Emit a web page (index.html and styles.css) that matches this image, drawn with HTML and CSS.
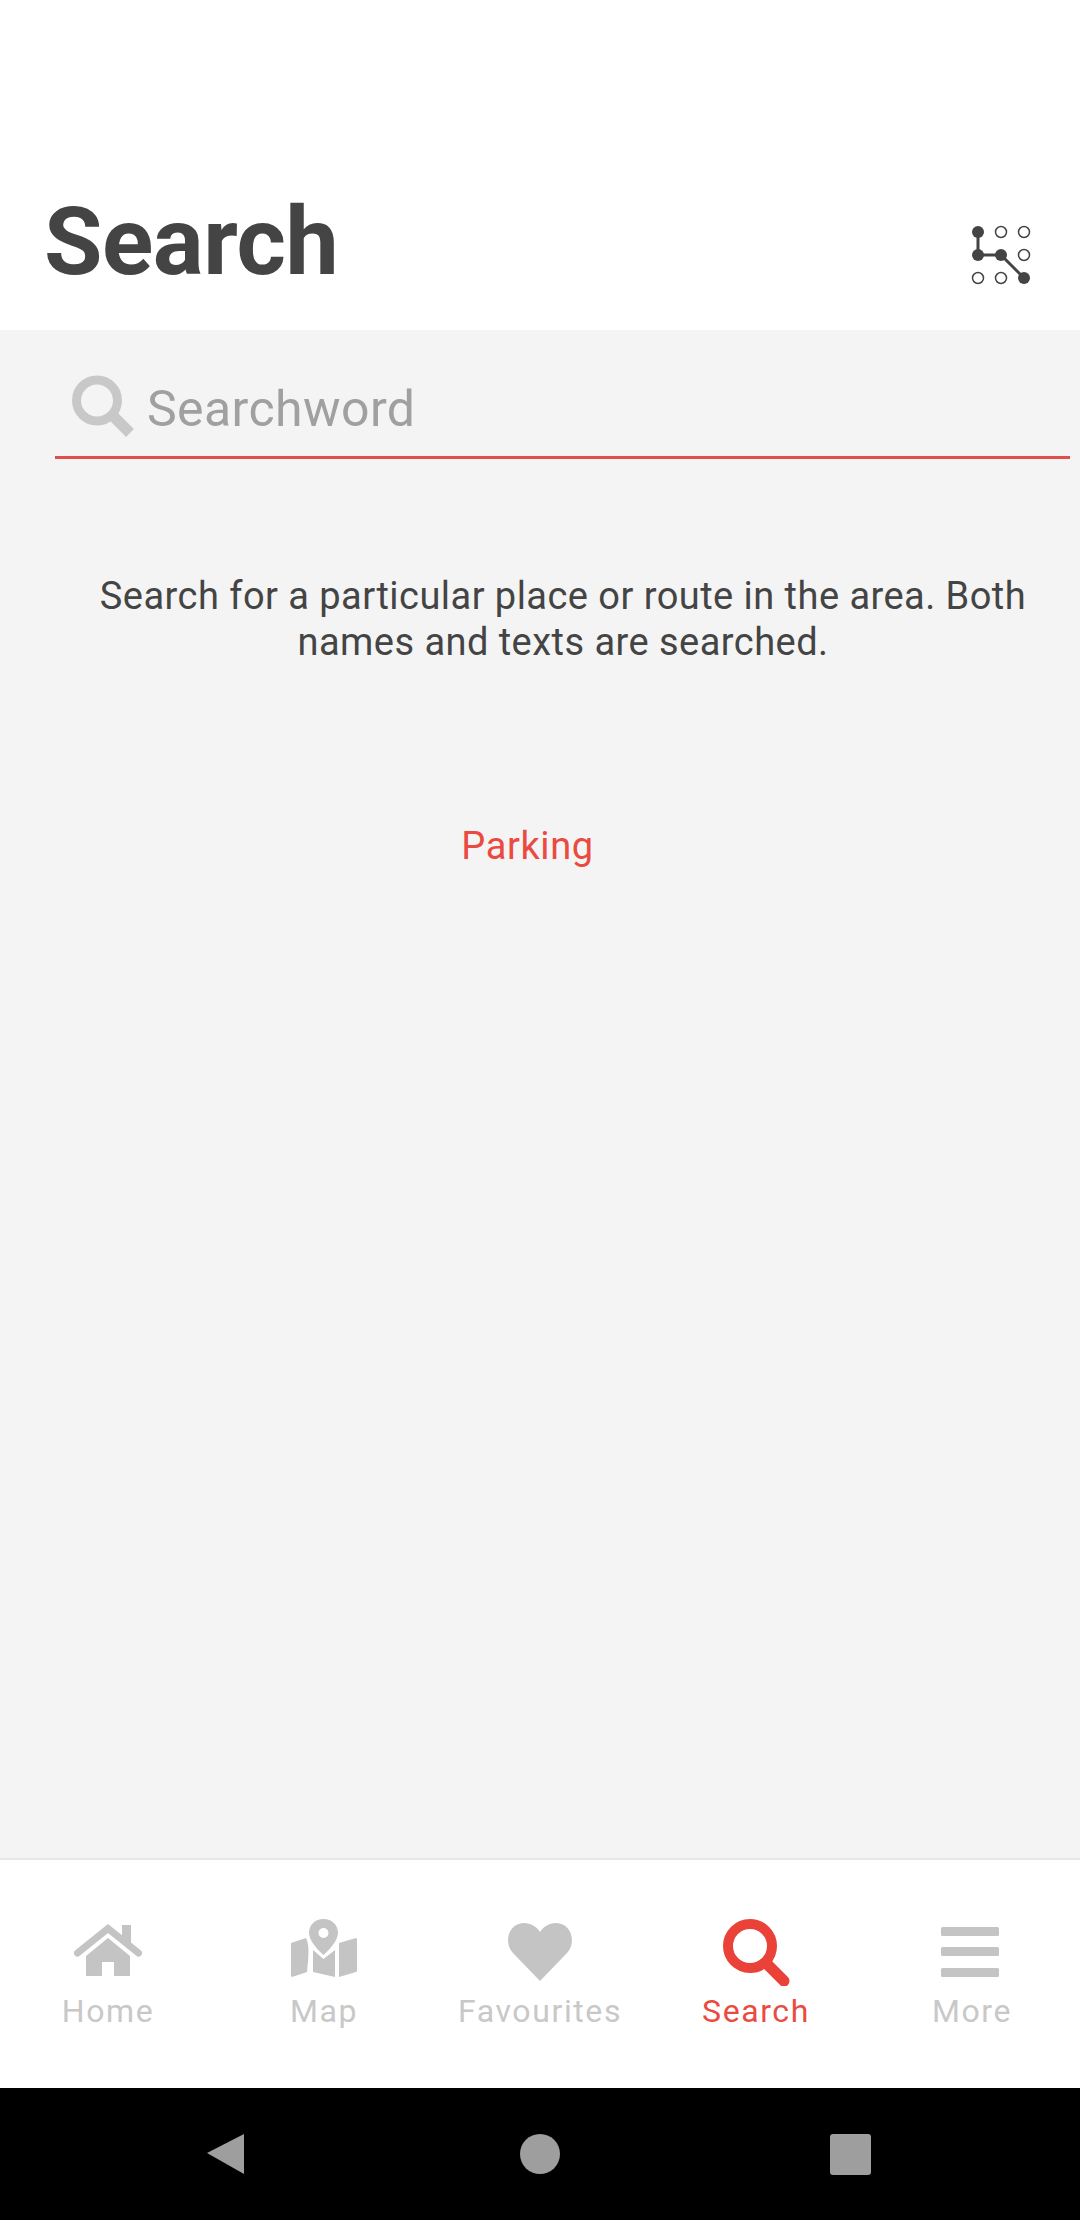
FILE: index.html
```html
<!DOCTYPE html>
<html lang="en">
<head>
<meta charset="utf-8">
<title>Search</title>
<link rel="stylesheet" href="styles.css">
</head>
<body>
<div class="app">
  <header class="header">
    <h1 class="title">Search</h1>
    <svg class="pattern" width="62" height="62" viewBox="0 0 62 62">
      <path class="pattern-line" d="M8 8V31H31L54 54"/>
      <circle class="dot-on" cx="8" cy="8" r="6"/>
      <circle class="dot-off" cx="31" cy="8" r="5.5"/>
      <circle class="dot-off" cx="54" cy="8" r="5.5"/>
      <circle class="dot-on" cx="8" cy="31" r="6"/>
      <circle class="dot-on" cx="31" cy="31" r="6"/>
      <circle class="dot-off" cx="54" cy="31" r="5.5"/>
      <circle class="dot-off" cx="8" cy="54" r="5.5"/>
      <circle class="dot-off" cx="31" cy="54" r="5.5"/>
      <circle class="dot-on" cx="54" cy="54" r="6"/>
    </svg>
  </header>
  <main class="content">
    <div class="search-field">
      <svg class="search-icon" width="62" height="66" viewBox="0 0 62 66">
        <circle class="lens-grey" cx="25" cy="28.500" r="20.500"/>
        <path class="handle-grey" d="M42 45L58 61"/>
      </svg>
      <span class="placeholder">Searchword</span>
    </div>
    <p class="intro">Search for a particular place or route in the area. Both names and texts are searched.</p>
    <div class="link-row"><span class="link">Parking</span></div>
  </main>
  <nav class="tabs">
    <div class="tab">
      <svg class="tab-icon" width="70" height="70" viewBox="0 0 70 70">
        <path class="fill-grey" d="M49 9H58V30L49 22Z"/>
        <path class="roof" d="M4.500 37L35 12.500L65.500 37"/>
        <path class="fill-grey" d="M35 22L57 40V60H41V46H29V60H13V40Z"/>
      </svg>
      <span class="tab-label">Home</span>
    </div>
    <div class="tab">
      <svg class="tab-icon" width="70" height="70" viewBox="0 0 70 70">
        <path class="fill-grey" d="M34.500 3C26 3 20 9 20 17C20 25 30 35 34.500 39C39 35 49 25 49 17C49 9 43 3 34.500 3ZM34.500 12A5 5 0 1 1 34.500 22A5 5 0 1 1 34.500 12Z" fill-rule="evenodd"/>
        <path class="fill-grey" d="M2 27L17 22C19 27 21 31 18 56L3 61L2 60Z"/>
        <path class="fill-grey" d="M24 34L34.500 43L46 34V61L24 56Z"/>
        <path class="fill-grey" d="M50 27L67 22L68 23V55L67 56L50 61Z"/>
      </svg>
      <span class="tab-label">Map</span>
    </div>
    <div class="tab">
      <svg class="tab-icon" width="70" height="70" viewBox="0 0 70 70">
        <path class="fill-grey" d="M35 65L8 37C-2 26 4 7 19 7C26 7 32 11 35 16C38 11 44 7 51 7C66 7 72 26 62 37Z"/>
      </svg>
      <span class="tab-label">Favourites</span>
    </div>
    <div class="tab tab-active">
      <svg class="tab-icon" width="70" height="70" viewBox="0 0 70 70">
        <circle class="lens-red" cx="29" cy="30" r="22"/>
        <path class="handle-red" d="M45 47L63 65"/>
      </svg>
      <span class="tab-label">Search</span>
    </div>
    <div class="tab">
      <svg class="tab-icon" width="70" height="70" viewBox="0 0 70 70">
        <rect class="fill-grey" x="4" y="11" width="58" height="9" rx="1.500"/>
        <rect class="fill-grey" x="4" y="31" width="58" height="9" rx="1.500"/>
        <rect class="fill-grey" x="4" y="52" width="58" height="9" rx="1.500"/>
      </svg>
      <span class="tab-label">More</span>
    </div>
  </nav>
  <div class="system-nav">
    <svg width="40" height="46" viewBox="0 0 40 46" class="nav-back"><path d="M39 3V43L2 22Z"/></svg>
    <span class="nav-home"></span>
    <span class="nav-recent"></span>
  </div>
</div>
</body>
</html>
```
FILE: styles.css
```css
* { box-sizing: border-box; }
html, body { margin: 0; padding: 0; }
body { width: 1080px; height: 2220px; overflow: hidden; font-family: Roboto, "Liberation Sans", sans-serif; background: #fff; }
.app { display: flex; flex-direction: column; height: 2220px; }

.header { flex: 0 0 330px; display: flex; justify-content: space-between; align-items: flex-start; padding: 188px 48px 0 44px; background: #fff; }
.title { margin: 0; font-size: 95px; line-height: 108px; font-weight: 700; color: #444; letter-spacing: -0.5px; }
.pattern { margin-top: 36px; }
.pattern-line { fill: none; stroke: #444; stroke-width: 3; }
.dot-on { fill: #444; }
.dot-off { fill: #fff; stroke: #444; stroke-width: 1.5; }

.content { flex: 1 1 auto; background: #f4f4f4; border-bottom: 2px solid #e8e8e8; display: flex; flex-direction: column; }
.search-field { margin: 42px 10px 0 55px; height: 87px; border-bottom: 3px solid #e04f4c; display: flex; align-items: flex-start; padding-left: 17px; }
.search-icon { flex: none; }
.lens-grey { fill: none; stroke: #c8c8c8; stroke-width: 9; }
.handle-grey { fill: none; stroke: #c8c8c8; stroke-width: 11; }
.placeholder { margin: 9px 0 0 13px; font-size: 50px; line-height: 56px; color: #a0a0a0; letter-spacing: 0.4px; }
.intro { margin: 114px 34px 0 80px; font-size: 38px; line-height: 46px; text-align: center; color: #444; letter-spacing: 0.46px; }
.link-row { margin-top: 158px; display: flex; justify-content: center; padding-right: 25px; }
.link { font-size: 38px; line-height: 46px; color: #ea4a40; letter-spacing: 0.6px; }

.tabs { flex: 0 0 228px; background: #fff; display: grid; grid-template-columns: repeat(5, 216px); }
.tab { display: flex; flex-direction: column; align-items: center; padding-top: 56px; color: #c8c8c8; }
.tab-active { color: #ea4a40; }
.tab-icon { display: block; }
.tab-label { margin-top: 5px; font-size: 32px; line-height: 40px; letter-spacing: 1.6px; }
.fill-grey { fill: #c4c4c4; }
.roof { fill: none; stroke: #c4c4c4; stroke-width: 7; stroke-linecap: round; }
.lens-red { fill: none; stroke: #ea4238; stroke-width: 10; }
.handle-red { fill: none; stroke: #ea4238; stroke-width: 11; stroke-linecap: round; }

.system-nav { flex: 0 0 132px; background: #000; display: grid; grid-template-columns: 205px 40px 275px 40px 270px 41px; align-items: center; }
.nav-back { grid-column: 2; fill: #9e9e9e; }
.nav-home { grid-column: 4; width: 40px; height: 40px; border-radius: 50%; background: #9e9e9e; }
.nav-recent { grid-column: 6; width: 41px; height: 41px; border-radius: 3px; background: #9e9e9e; }
```
